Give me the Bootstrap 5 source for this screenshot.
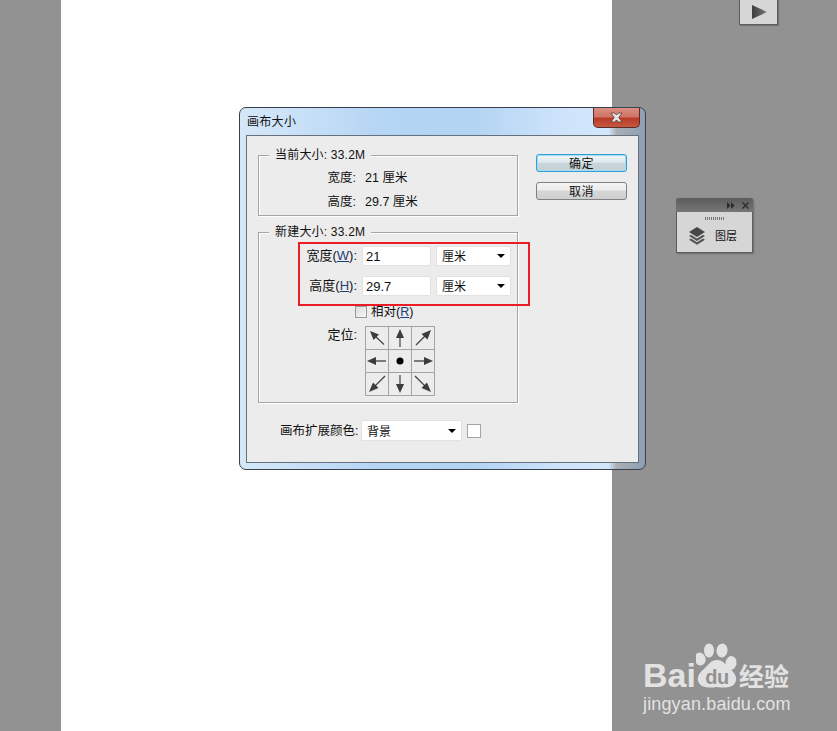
<!DOCTYPE html>
<html lang="zh-CN">
<head>
<meta charset="utf-8">
<title>画布大小</title>
<link rel="stylesheet" href="https://cdn.jsdelivr.net/npm/bootstrap@5.3.0/dist/css/bootstrap.min.css">
<style>
html,body{margin:0;height:100%;}
body.ps-desk{position:relative;width:837px;height:731px;overflow:hidden;background:#929292;color:#111;
  font:12px/16px "Liberation Sans","Noto Sans CJK SC",sans-serif;}
.ps-doc{position:absolute;left:61px;top:0;width:551px;height:731px;background:#fff;}
.ps-dlg{position:absolute;left:239px;top:107px;width:407px;height:363px;border:1px solid #39424c;border-radius:7px;
  padding:0 6px 6px 6px;display:flex;flex-direction:column;
  background:linear-gradient(90deg,#d5e7f8 0,#cfe4f8 8%,#b5d5f4 35%,#b3d4f3 58%,#cfe4fb 80%,#d2e6fb 91%,#a9aeb3 93%,#8d9fb4 100%);}
.ps-bar{height:27px;display:flex;align-items:flex-start;justify-content:space-between;flex:none;margin-left:1px;}
.ps-ttl{padding-top:6px;font-size:12px;line-height:17px;letter-spacing:.3px;}
.ps-close{width:47px;height:20px;margin-right:-1px;border:1px solid #5d2a24;border-top:0;border-radius:0 0 5px 5px;padding:0;
  display:flex;align-items:center;justify-content:center;
  background:linear-gradient(180deg,#dd8f84 0,#cf7467 45%,#b93a27 55%,#c65843 100%);}
.ps-client{flex:1;border:1px solid #66717d;background:#ececec;display:flex;padding:0 0 0 11px;}
.ps-left{width:260px;padding-top:19px;flex:none;}
.ps-right{margin-left:18px;padding-top:18px;display:flex;flex-direction:column;gap:10px;}
.ps-btn{width:91px;height:18px;padding:1px 0 0;border-radius:3px;font-size:12px;line-height:16px;color:#111;border:1px solid #808080;
  background:linear-gradient(180deg,#f4f4f4 0,#ececec 45%,#d6d6d6 50%,#cfcfcf 100%);letter-spacing:.5px;}
.ps-btn.ps-def{border-color:#2f9fd6;box-shadow:inset 0 0 0 1px #a9dcf3;background:linear-gradient(180deg,#eef5f8 0,#dfe9ee 45%,#c9d6dc 50%,#c2d0d6 100%);}
.ps-grp{border:1px solid #a4a4a4;box-shadow:1px 1px 0 #fff,inset 1px 1px 0 #fff;}
.ps-g1{height:61px;}
.ps-g2{height:171px;margin-top:16px;}
.ps-leg{width:fit-content;margin:-9px 0 0 10px;padding:0 6px;background:#ececec;line-height:16px;height:16px;letter-spacing:.2px;}
.ps-rowa{display:flex;align-items:center;height:24px;}
.ps-rowa .ps-lb{width:97px;text-align:right;font-size:12.500px;}
.ps-rowa .ps-vl{margin-left:9px;font-size:12.500px;}
.ps-stack{margin-top:3px;}
.ps-fields{margin-top:6px;display:flex;flex-direction:column;gap:10px;}
.ps-rowb{display:flex;align-items:center;height:20px;}
.ps-rowb .ps-lb{width:98px;text-align:right;font-size:13px;}
.ps-inp{width:69px;height:20px;margin-left:5px;padding:0 0 0 3px;border:1px solid #e2e2e2;border-radius:2px;font-size:13px;line-height:18px;color:#111;background:#fff;}
.ps-sel{width:75px;height:20px;margin-left:5px;padding:2px 0 0 5px;border:1px solid #e2e2e2;border-radius:2px;font-size:12px;line-height:16px;color:#111;
  background-color:#fff;background-image:url("data:image/svg+xml,%3Csvg xmlns='http://www.w3.org/2000/svg' width='8' height='4'%3E%3Cpath d='M0 0h8L4 4z' fill='%23000'/%3E%3C/svg%3E");background-position:right 5px center;background-size:8px 4px;}
.ps-wide{width:101px;height:21px;margin-left:0;}
.ps-chk{display:flex;align-items:center;margin:10px 0 0 96px;height:12px;font-size:12.500px;}
.ps-box{width:12px;height:12px;border:1px solid #9a9a9a;background:linear-gradient(135deg,#dcdcdc,#f6f6f6);margin-right:4px;flex:none;}
.ps-anch{display:flex;margin-top:8px;}
.ps-anch .ps-lb{width:98px;text-align:right;padding-top:1px;font-size:13px;}
.ps-grid{margin-left:8px;display:grid;grid-template-columns:repeat(3,23px);grid-template-rows:repeat(3,23px);border:1px solid #a4a4a4;border-width:1px 0 0 1px;width:70px;height:70px;}
.ps-grid>div{border:1px solid #a4a4a4;border-width:0 1px 1px 0;display:flex;align-items:center;justify-content:center;}
.ps-ext{display:flex;align-items:center;margin-top:17px;height:21px;padding-left:22px;}
.ps-extl{width:81px;padding-top:1px;font-size:12.500px;white-space:nowrap;}
.ps-swatch{width:14px;height:14px;border:1px solid #a4a4a4;background:#fff;margin-left:5px;}
.ps-red{position:absolute;left:298px;top:242px;width:232px;height:64px;border:2px solid #ec1c24;}
u{text-underline-offset:1px;color:#1c3f7a;}
.ps-panel{position:absolute;left:676px;top:198px;width:77px;height:55px;background:#d6d6d6;border:1px solid #5c5c5c;border-top:0;border-radius:3px 3px 0 0;box-shadow:1px 1px 2px rgba(0,0,0,.25);}
.ps-ptop{height:14px;margin:0 -1px;border-radius:3px 3px 0 0;background:linear-gradient(180deg,#5c5c5c,#767676);display:flex;justify-content:flex-end;align-items:center;gap:7px;padding-right:4px;}
.ps-grip{width:20px;height:3px;margin:5px auto 0;background:repeating-linear-gradient(90deg,#777 0,#777 1px,transparent 1px,transparent 2px);}
.ps-pbody{display:flex;align-items:center;margin-top:7px;padding-left:11px;gap:9px;font-size:11px;line-height:14px;color:#111;}
.ps-tab{position:absolute;left:739px;top:-2px;width:39px;height:27px;background:#d6d6d6;border:1px solid #5c5c5c;display:flex;align-items:center;justify-content:center;box-shadow:1px 1px 1px rgba(0,0,0,.2);}
.ps-logo{position:absolute;left:643px;top:643px;width:150px;color:#e2e2e2;}
.ps-lrow{display:flex;align-items:flex-end;height:47px;}
.ps-bai{font:700 34px/30px "Liberation Sans",sans-serif;}
.ps-paw{position:relative;width:42px;height:47px;flex:none;}
.ps-du{position:absolute;left:6px;top:24px;width:30px;text-align:center;font:700 20px/20px "Liberation Sans",sans-serif;color:#929292;letter-spacing:-.5px;}
.ps-jy{font-size:25px;line-height:30px;font-weight:700;margin-left:1px;white-space:nowrap;font-family:"Noto Sans CJK SC",sans-serif;}
.ps-url{font:18px/20px "Liberation Sans",sans-serif;letter-spacing:.15px;margin-top:4px;white-space:nowrap;}
</style>
</head>
<body class="ps-desk">
<div class="ps-doc"></div>

<div class="ps-dlg">
  <div class="ps-bar">
    <div class="ps-ttl">画布大小</div>
    <div class="ps-close"><svg width="17" height="11" viewBox="0 0 17 11"><path d="M3 1h3.500l2 2 2-2H14l-3.200 4.500L14 10h-3.500l-2-2-2 2H3l3.200-4.500z" fill="#e4e4e4" stroke="#5a3a36" stroke-width=".8"/></svg></div>
  </div>
  <div class="ps-client">
    <div class="ps-left">
      <div class="ps-grp ps-g1">
        <div class="ps-leg">当前大小: 33.2M</div>
        <div class="ps-stack">
          <div class="ps-rowa"><div class="ps-lb">宽度:</div><div class="ps-vl">21 厘米</div></div>
          <div class="ps-rowa"><div class="ps-lb">高度:</div><div class="ps-vl">29.7 厘米</div></div>
        </div>
      </div>
      <div class="ps-grp ps-g2">
        <div class="ps-leg">新建大小: 33.2M</div>
        <div class="ps-fields">
          <div class="ps-rowb"><div class="ps-lb">宽度(<u>W</u>):</div><input class="form-control ps-inp" value="21"><select class="form-select ps-sel"><option>厘米</option></select></div>
          <div class="ps-rowb"><div class="ps-lb">高度(<u>H</u>):</div><input class="form-control ps-inp" value="29.7"><select class="form-select ps-sel"><option>厘米</option></select></div>
        </div>
        <div class="ps-chk"><span class="ps-box"></span><span>相对(<u>R</u>)</span></div>
        <div class="ps-anch">
          <div class="ps-lb">定位:</div>
          <div class="ps-grid">
            <div><svg width="22" height="22" viewBox="0 0 22 22"><path d="M18 17.500 8 8" stroke="#444" stroke-width="1.200"/><path d="M4 4l9 3.500L7.500 13z" fill="#3c3c3c"/></svg></div>
            <div><svg width="22" height="22" viewBox="0 0 22 22"><path d="M11 20V8" stroke="#444" stroke-width="1.200"/><path d="M11 2l4 9H7z" fill="#3c3c3c"/></svg></div>
            <div><svg width="22" height="22" viewBox="0 0 22 22"><path d="M4 18 14 8" stroke="#444" stroke-width="1.200"/><path d="M19 3l-3.500 9.500L9.500 7z" fill="#3c3c3c"/></svg></div>
            <div><svg width="22" height="22" viewBox="0 0 22 22"><path d="M20 11H8" stroke="#333" stroke-width="1.200"/><path d="M1 11l9-4v8z" fill="#3c3c3c"/></svg></div>
            <div><svg width="22" height="22" viewBox="0 0 22 22"><circle cx="11" cy="11" r="3.500" fill="#000"/></svg></div>
            <div><svg width="22" height="22" viewBox="0 0 22 22"><path d="M2 11h12" stroke="#333" stroke-width="1.200"/><path d="M21 11l-9-4v8z" fill="#3c3c3c"/></svg></div>
            <div><svg width="22" height="22" viewBox="0 0 22 22"><path d="M19 3 8 14" stroke="#444" stroke-width="1.200"/><path d="M3 19l4-9.500 5.500 5.500z" fill="#3c3c3c"/></svg></div>
            <div><svg width="22" height="22" viewBox="0 0 22 22"><path d="M11 2v12" stroke="#444" stroke-width="1.200"/><path d="M11 20l4-9H7z" fill="#3c3c3c"/></svg></div>
            <div><svg width="22" height="22" viewBox="0 0 22 22"><path d="M3 3 14 14" stroke="#444" stroke-width="1.200"/><path d="M19 19l-9.500-4L15 9.500z" fill="#3c3c3c"/></svg></div>
          </div>
        </div>
      </div>
      <div class="ps-ext"><div class="ps-extl">画布扩展颜色:</div><select class="form-select ps-sel ps-wide"><option>背景</option></select><div class="ps-swatch"></div></div>
    </div>
    <div class="ps-right">
      <button type="button" class="btn ps-btn ps-def">确定</button>
      <button type="button" class="btn ps-btn">取消</button>
    </div>
  </div>
</div>

<div class="ps-red"></div>

<div class="ps-tab"><svg width="16" height="14" viewBox="0 0 16 14"><defs><linearGradient id="tg" x1="0" x2="1"><stop offset="0" stop-color="#3e3e3e"/><stop offset="1" stop-color="#777"/></linearGradient></defs><path d="M1 0l15 7-15 7z" fill="url(#tg)"/></svg></div>

<div class="ps-panel">
  <div class="ps-ptop">
    <svg width="8" height="7" viewBox="0 0 8 7"><path d="M0 0l3.500 3.500L0 7zM4 0l3.500 3.500L4 7z" fill="#2a2a2a"/></svg>
    <svg width="7" height="7" viewBox="0 0 7 7"><path d="M.5.500l6 6M6.500.500l-6 6" stroke="#2a2a2a" stroke-width="1.300"/></svg>
  </div>
  <div class="ps-grip"></div>
  <div class="ps-pbody">
    <svg width="18" height="18" viewBox="0 0 18 18"><path d="M9 0l8 5-8 5-8-5z" fill="#474747"/><path d="M1 9l2-1.200 6 3.700 6-3.700L17 9l-8 5z" fill="#555"/><path d="M1 12.800l2-1.200 6 3.600 6-3.600 2 1.200-8 5z" fill="#555"/></svg>
    <span>图层</span>
  </div>
</div>

<div class="ps-logo">
  <div class="ps-lrow">
    <span class="ps-bai">Bai</span>
    <div class="ps-paw">
      <svg width="42" height="47" viewBox="0 0 42 47"><g fill="#e2e2e2"><ellipse cx="4" cy="16" rx="5.500" ry="6.500" transform="rotate(-20 4 16)"/><ellipse cx="13" cy="7.500" rx="5" ry="7"/><ellipse cx="26" cy="7.500" rx="5.500" ry="7" transform="rotate(8 26 7.500)"/><ellipse cx="35" cy="20" rx="5.500" ry="7" transform="rotate(12 35 20)"/><path d="M21 17c6 0 9 5 13 9 5 4 8 9 5 14-3 5-10 5-18 4-8 1-15 1-18-4-3-5 0-10 5-14 4-4 7-9 13-9z"/></g></svg>
      <span class="ps-du">du</span>
    </div>
    <span class="ps-jy">经验</span>
  </div>
  <div class="ps-url">jingyan.baidu.com</div>
</div>

<script src="https://cdn.jsdelivr.net/npm/bootstrap@5.3.0/dist/js/bootstrap.bundle.min.js"></script>
</body>
</html>
